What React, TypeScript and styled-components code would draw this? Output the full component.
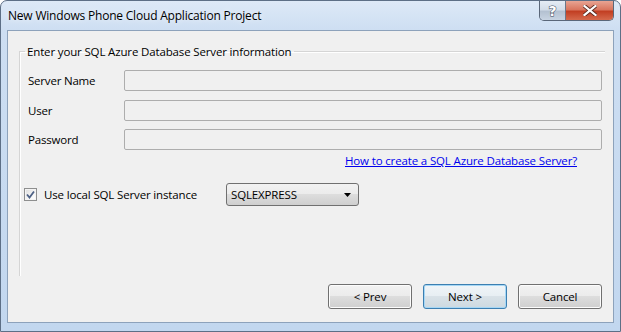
import React, { useState } from "react"
import styled, { createGlobalStyle, css } from "styled-components"

const GlobalStyle = createGlobalStyle`
    html, body {
        margin: 0;
        padding: 0;
        background: #ffffff;
    }
    body {
        font-family: "Open Sans", "Noto Sans", "Liberation Sans", sans-serif;
        font-size: 11.5px;
        color: #000;
    }
`

const fields = ["Server Name", "User", "Password"]

const App: React.FC = () => {
    const [useLocal, setUseLocal] = useState<boolean>(true)

    return (
        <>
            <GlobalStyle />
            <Window>
                <TitleBar>
                    <Title>New Windows Phone Cloud Application Project</Title>
                    <CaptionGroup>
                        <CaptionButton kind="help">?</CaptionButton>
                        <CaptionButton kind="close">
                            <svg width="14" height="11" viewBox="0 0 14 11">
                                <path
                                    d="M1.5 1 L12.5 10 M12.5 1 L1.5 10"
                                    stroke="#5a2a20"
                                    strokeWidth="4"
                                    strokeLinecap="square"
                                />
                                <path
                                    d="M1.5 1 L12.5 10 M12.5 1 L1.5 10"
                                    stroke="#ffffff"
                                    strokeWidth="2.2"
                                    strokeLinecap="square"
                                />
                            </svg>
                        </CaptionButton>
                    </CaptionGroup>
                </TitleBar>

                <Client>
                    <Group>
                        <Legend>Enter your SQL Azure Database Server information</Legend>
                        <Form>
                            {fields.map((f) => (
                                <React.Fragment key={f}>
                                    <Label>{f}</Label>
                                    <TextBox disabled type={f === "Password" ? "password" : "text"} />
                                </React.Fragment>
                            ))}
                        </Form>
                        <LinkRow>
                            <HelpLink href="#">How to create a SQL Azure Database Server?</HelpLink>
                        </LinkRow>
                        <LocalRow>
                            <CheckLabel onClick={() => setUseLocal(!useLocal)}>
                                <CheckBox>
                                    {useLocal && (
                                        <svg width="9" height="9" viewBox="0 0 9 9">
                                            <path
                                                d="M1 4.5 L3.5 7.5 L8 1.5"
                                                fill="none"
                                                stroke="#4d6185"
                                                strokeWidth="1.8"
                                            />
                                        </svg>
                                    )}
                                </CheckBox>
                                Use local SQL Server instance
                            </CheckLabel>
                            <Combo>
                                <span>SQLEXPRESS</span>
                                <svg width="8" height="4" viewBox="0 0 8 4">
                                    <path d="M0 0 H7 L3.5 4 Z" fill="#000" />
                                </svg>
                            </Combo>
                        </LocalRow>
                    </Group>

                    <ButtonBar>
                        <Button>&lt; Prev</Button>
                        <Button primary>Next &gt;</Button>
                        <Button>Cancel</Button>
                    </ButtonBar>
                </Client>
            </Window>
        </>
    )
}

const Window = styled.div`
    width: 621px;
    height: 332px;
    box-sizing: border-box;
    border: 1px solid #5d6f86;
    border-radius: 7px 7px 0 0;
    background: linear-gradient(180deg, #dde9f7 0px, #cddef2 30px, #c2d7ef 100%);
    display: flex;
    flex-direction: column;
    overflow: hidden;
`

const TitleBar = styled.div`
    height: 29px;
    display: flex;
    align-items: flex-start;
`

const Title = styled.div`
    padding-left: 7px;
    line-height: 29px;
    font-size: 12px;
    letter-spacing: -0.2px;
    color: #000;
    text-shadow: 0 0 6px rgba(255, 255, 255, 0.9);
`

const CaptionGroup = styled.div`
    margin-left: auto;
    margin-right: 6px;
    display: flex;
    height: 19px;
    border: 1px solid #5a6779;
    border-top: none;
    border-radius: 0 0 5px 5px;
    overflow: hidden;
`

const CaptionButton = styled.div<{ kind: "help" | "close" }>`
    display: flex;
    align-items: center;
    justify-content: center;
    height: 100%;
    ${({ kind }) =>
        kind === "help"
            ? css`
                  width: 25px;
                  border-right: 1px solid #6b7789;
                  background: linear-gradient(180deg, #e5ecf5 0%, #d3dde9 45%, #b4c1d1 55%, #c8d4e2 100%);
                  font-family: "DejaVu Sans", sans-serif;
                  font-size: 14px;
                  font-weight: bold;
                  color: #fff;
                  -webkit-text-stroke: 1px #3e4a5c;
                  paint-order: stroke fill;
              `
            : css`
                  width: 47px;
                  background: linear-gradient(180deg, #e8a493 0%, #d9765f 45%, #c23f23 55%, #d5694c 100%);
              `}
`

const Client = styled.div`
    flex: 1;
    margin: 0 6px 8px 6px;
    border: 1px solid #8da2bb;
    background: #f0f0f0;
    display: flex;
    flex-direction: column;
`

const Group = styled.fieldset`
    flex: 1;
    margin: 13px 8px 0 11px;
    padding: 11px 3px 0 7px;
    border: none;
    border-top: 1px solid #d5d5d5;
    border-left: 1px solid #d5d5d5;
    box-shadow: inset 1px 1px 0 #ffffff;
    min-width: 0;
`

const Legend = styled.legend`
    padding: 0 3px 0 2px;
    margin-left: -2px;
    line-height: 15px;
    letter-spacing: -0.15px;
`

const Form = styled.div`
    display: grid;
    grid-template-columns: 96px 1fr;
    grid-auto-rows: 21px;
    row-gap: 8.5px;
    align-items: center;
`

const Label = styled.label`
    letter-spacing: -0.2px;
    padding-left: 1px;
`

const TextBox = styled.input`
    height: 21px;
    box-sizing: border-box;
    border: 1px solid #adadad;
    border-radius: 2px;
    background: #f0f0f0;
    margin: 0 0 0 1px;
`

const LinkRow = styled.div`
    display: flex;
    justify-content: flex-end;
    padding-right: 25px;
    margin-top: 3px;
    line-height: 15px;
`

const HelpLink = styled.a`
    color: #0000ee;
    text-decoration: underline;
    letter-spacing: -0.15px;
`

const LocalRow = styled.div`
    display: flex;
    align-items: center;
    margin-top: 15px;
    margin-left: -3px;
`

const CheckLabel = styled.label`
    display: flex;
    align-items: center;
    gap: 7px;
    width: 202px;
    letter-spacing: -0.15px;
    cursor: default;
`

const CheckBox = styled.span`
    width: 11px;
    height: 11px;
    border: 1px solid #8e8f8f;
    background: linear-gradient(135deg, #dcdcdc 0%, #f6f6f6 60%, #ffffff 100%);
    box-shadow: inset 0 0 0 1px #f4f4f4;
    display: flex;
    align-items: center;
    justify-content: center;
`

const Combo = styled.div`
    width: 133px;
    height: 23px;
    box-sizing: border-box;
    border: 1px solid #707070;
    border-radius: 3px;
    background: linear-gradient(180deg, #f2f2f2 0%, #ebebeb 50%, #dddddd 50%, #cfcfcf 100%);
    display: flex;
    align-items: center;
    justify-content: space-between;
    padding: 0 6px 0 4px;
    letter-spacing: -0.15px;
`

const ButtonBar = styled.div`
    display: flex;
    justify-content: flex-end;
    gap: 11px;
    margin: 8px 11px 13px 0;
`

const Button = styled.button<{ primary?: boolean }>`
    width: 84px;
    height: 25px;
    box-sizing: border-box;
    border-radius: 3px;
    font-family: inherit;
    font-size: 11.5px;
    letter-spacing: -0.15px;
    color: #000;
    padding: 0;
    border: 1px solid #707070;
    background: linear-gradient(180deg, #f2f2f2 0%, #ebebeb 50%, #dddddd 50%, #cfcfcf 100%);
    box-shadow: inset 0 0 0 1px #fcfcfc;
    ${({ primary }) =>
        primary &&
        css`
            border-color: #3c7fb1;
            box-shadow: inset 0 0 0 1px #a6d7f5;
            background: linear-gradient(180deg, #f0f5f8 0%, #e7eef3 50%, #d9e2e8 50%, #cdd9e0 100%);
        `}
`

export default App
